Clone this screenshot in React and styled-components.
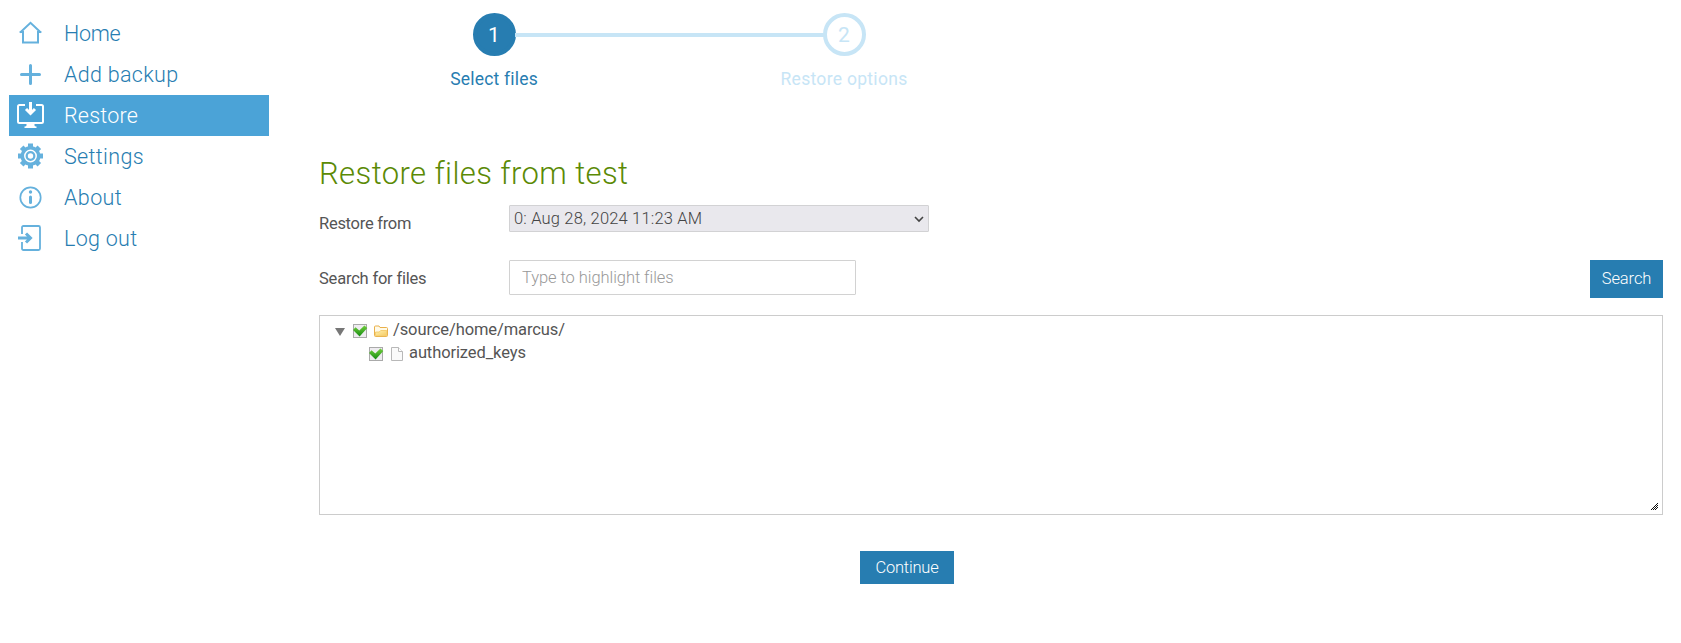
import React from "react";
import styled, { createGlobalStyle } from "styled-components";

const Global = createGlobalStyle`
  * { box-sizing: border-box; }
  body { margin: 0; background: #fff; color: #555; font: 16px/20px Roboto, "Liberation Sans", sans-serif; }
`;
const Page = styled.div`
  display: flex;
  width: 1681px;
  height: 643px;
  overflow: hidden;
`;
const Sidebar = styled.nav`
  width: 260px;
  margin: 13px 50px 0 9px;
  flex: none;
`;
const NavItem = styled.a`
  display: flex;
  align-items: center;
  height: 41px;
  color: ${(p) => (p.$active ? "#fff" : "#277db1")};
  background: ${(p) => (p.$active ? "#4ba3d7" : "transparent")};
  font-size: 21.5px;
  font-weight: 300;
  line-height: 40px;
  letter-spacing: ${(p) => p.$ls}px;
  white-space: nowrap;
  svg { width: 28px; height: 28px; margin: 0 20px 0 7px; flex: none; color: ${(p) => (p.$active ? "#fff" : "#65b1dd")}; }
  span { padding-top: 1px; }
`;
const Main = styled.main`
  width: 1344px;
  flex: none;
`;
const Steps = styled.div`
  display: flex;
  width: 700px;
  height: 92px;
  padding-top: 13px;
`;
const Step = styled.div`
  display: flex;
  flex-direction: column;
  align-items: center;
  width: 160px;
  margin-left: ${(p) => p.$gap}px;
  color: ${(p) => (p.$active ? "#277db1" : "#c7e5f6")};
`;
const Circle = styled.div`
  width: 43px;
  height: 43px;
  border-radius: 50%;
  border: 4px solid ${(p) => (p.$active ? "#277db1" : "#c7e5f6")};
  background: ${(p) => (p.$active ? "#277db1" : "#fff")};
  color: ${(p) => (p.$active ? "#fff" : "#c7e5f6")};
  font-size: 21px;
  line-height: 36px;
  text-align: center;
`;
const StepLabel = styled.div`
  margin-top: 13px;
  font-size: 17.5px;
  line-height: 20px;
  letter-spacing: ${(p) => p.$ls}px;
  white-space: nowrap;
`;
const Connector = styled.div`
  width: 309px;
  height: 4px;
  margin: 20px -60px 0 -59px;
  background: #c7e5f6;
  flex: none;
`;
const Title = styled.h1`
  margin: 0;
  padding-top: 62px;
  height: 113px;
  color: #5b8a05;
  font-size: 31px;
  font-weight: 300;
  line-height: 40px;
  letter-spacing: 0.4px;
`;
const Field = styled.div`
  display: flex;
  align-items: flex-start;
  height: 55px;
`;
const Label = styled.label`
  width: 190px;
  padding-top: 9px;
  font-size: 16.5px;
  line-height: 20px;
  letter-spacing: ${(p) => p.$ls}px;
`;
const Select = styled.div`
  display: flex;
  align-items: center;
  justify-content: space-between;
  width: 420px;
  height: 27px;
  padding: 0 4px;
  border: 1px solid #d2d2d4;
  border-radius: 1px;
  background: #e9e8ed;
  color: #444;
  font-size: 16.5px;
  font-weight: 300;
  letter-spacing: 0.18px;
`;
const Input = styled.input`
  width: 347px;
  height: 35px;
  padding: 0 12px 1px;
  border: 1px solid #d2d2d2;
  border-radius: 1px;
  outline: 0;
  font: 300 16.5px/20px Roboto, "Liberation Sans", sans-serif;
  letter-spacing: -0.06px;
  &::placeholder { color: #999; opacity: 1; }
`;
const Button = styled.button`
  width: ${(p) => p.$w}px;
  height: ${(p) => p.$h}px;
  padding: 0;
  border: 0;
  background: #277db1;
  color: #fff;
  font: 300 16.5px/20px Roboto, "Liberation Sans", sans-serif;
  letter-spacing: ${(p) => p.$ls}px;
`;
const SearchButton = styled(Button)`
  margin-left: auto;
  padding-bottom: 1px;
`;
const Tree = styled.div`
  position: relative;
  height: 200px;
  padding: 3px 0 0 15px;
  border: 1px solid #ccc;
`;
const TreeRow = styled.div`
  display: flex;
  align-items: center;
  height: 23px;
  padding-left: ${(p) => p.$indent}px;
  font-size: 16.5px;
  line-height: 20px;
  letter-spacing: -0.1px;
`;
const RowIcon = styled.svg`
  flex: none;
  margin: ${(p) => p.$top ?? 1}px ${(p) => p.$gap}px 0 0;
`;
const Name = styled.span`
  padding-bottom: 2px;
`;
const Grip = styled.svg`
  position: absolute;
  right: 4px;
  bottom: 4px;
`;
const Actions = styled.div`
  display: flex;
  justify-content: center;
  padding: 36px 168px 0 0;
`;

const HomeIcon = () => (
  <svg viewBox="0 0 28 28" fill="none" stroke="currentColor" strokeWidth="2"><path d="M4.200 12.500 14.500 2.800 24.800 12.500M7 11v11.500h15V11M3.600 12H7M22 12h3.400" /></svg>
);
const PlusIcon = () => (
  <svg viewBox="0 0 28 28" fill="none" stroke="currentColor" strokeWidth="3" strokeLinecap="round"><path d="M14.5 4.500v18M5.500 13.500h18" /></svg>
);
const RestoreIcon = () => (
  <svg viewBox="0 0 28 28" fill="none" stroke="currentColor" strokeWidth="2">
    <path d="M9 3H3.5Q2 3 2 4.500V19.500Q2 21 3.500 21H25.500Q27 21 27 19.500V4.500Q27 3 25.500 3H20" />
    <path d="M14.5 0v11" strokeWidth="3" /><path d="m10 7 4.500 4.500L19 7" strokeWidth="3" />
    <path fill="currentColor" stroke="none" d="M10.500 21.500h8v2q0 1 2 1v1.500H8.500v-1.500q2 0 2-1z" />
  </svg>
);
const GearIcon = () => (
  <svg viewBox="0 0 28 28" fill="none" stroke="currentColor">
    {[0, 45, 90, 135].map((a) => <path key={a} d="M14.500 .500v25" strokeWidth="5" transform={`rotate(${a} 14.500 13)`} />)}
    <circle cx="14.500" cy="13" r="10" fill="currentColor" stroke="none" />
    <circle cx="14.500" cy="13" r="5.700" stroke="#fff" strokeWidth="1.500" />
    <circle cx="14.500" cy="13" r="2.700" fill="#fff" stroke="none" />
  </svg>
);
const InfoIcon = () => (
  <svg viewBox="0 0 28 28" fill="none" stroke="currentColor">
    <circle cx="14.500" cy="13.500" r="10.200" strokeWidth="1.700" />
    <circle cx="14.500" cy="8" r="1.700" fill="currentColor" stroke="none" />
    <path d="M14.500 13v5.500" strokeWidth="3" strokeLinecap="round" />
  </svg>
);
const LogoutIcon = () => (
  <svg viewBox="0 0 28 28" fill="none" stroke="currentColor" strokeWidth="1.800">
    <path d="M6 9V2.500Q6 1 7.500 1H22.500Q24 1 24 2.500V23.500Q24 25 22.500 25H7.500Q6 25 6 23.500V17" />
    <path d="M2 13h12M10 8.500l4.500 4.500L10 17.500" strokeWidth="3" />
  </svg>
);
const Check = () => (
  <RowIcon $gap={5} width="16" height="16" viewBox="0 0 16 16">
    <defs><linearGradient id="tick" x2="0" y2="1"><stop stopColor="#72cf3c" /><stop offset="1" stopColor="#148b12" /></linearGradient></defs>
    <rect x="1.500" y="1.500" width="13" height="13" fill="#eeecf0" stroke="#aaa" />
    <path d="M1 7 3.500 4.300 7.300 7.600 12.400 2.500 15.300 5 7.600 13.500z" fill="url(#tick)" />
  </RowIcon>
);
const Folder = () => (
  <RowIcon $gap={4} width="16" height="16" viewBox="0 0 16 16">
    <defs><linearGradient id="fold" x2="1" y2="1"><stop stopColor="#fff0b0" /><stop offset="1" stopColor="#f5cb62" /></linearGradient></defs>
    <path d="M1.500 12.500V4Q1.500 3 2.500 3h3.500l1 1.500h6.500q1 0 1 1v7q0 1-1 1h-11q-1 0-1-1z" fill="#fffae8" stroke="#e9b04b" />
    <path d="M2.500 12.800V9h3.700l1.500-1.500h6v5.300z" fill="url(#fold)" stroke="#f1c55f" strokeWidth=".8" />
  </RowIcon>
);
const FileIcon = () => (
  <RowIcon $gap={4} width="16" height="16" viewBox="0 0 16 16">
    <path d="M2.500 1.500h7l4 4v9h-11z" fill="#fafafa" stroke="#b8b8b8" /><path d="M9.500 1.500v4h4" fill="#fff" stroke="#b8b8b8" />
  </RowIcon>
);

const items = [
  ["Home", HomeIcon, -0.3], ["Add backup", PlusIcon, 0.3], ["Restore", RestoreIcon, 0.2],
  ["Settings", GearIcon, 0.35], ["About", InfoIcon, 0.4], ["Log out", LogoutIcon, 0.3],
];
const gripDots = [[6, 0], [5, 1], [4, 2], [6, 2], [3, 3], [5, 3], [2, 4], [4, 4], [6, 4], [1, 5], [3, 5], [5, 5], [0, 6], [2, 6], [4, 6]];

export default function App() {
  return (
    <Page>
      <Global />
      <Sidebar>
        {items.map(([name, Icon, ls]) => (
          <NavItem key={name} $active={name === "Restore"} $ls={ls}><Icon /><span>{name}</span></NavItem>
        ))}
      </Sidebar>
      <Main>
        <Steps>
          <Step $active $gap={95}><Circle $active>1</Circle><StepLabel $ls={0.2}>Select files</StepLabel></Step>
          <Connector />
          <Step $gap={0}><Circle>2</Circle><StepLabel $ls={0.3}>Restore options</StepLabel></Step>
        </Steps>
        <Title>Restore files from test</Title>
        <Field>
          <Label $ls={-0.27}>Restore from</Label>
          <Select>
            <span>0: Aug 28, 2024 11:23 AM</span>
            <svg width="10" height="8" viewBox="0 0 10 8" fill="none" stroke="#444" strokeWidth="1.600"><path d="m1 2 4 4 4-4" /></svg>
          </Select>
        </Field>
        <Field>
          <Label $ls={-0.2}>Search for files</Label>
          <Input placeholder="Type to highlight files" />
          <SearchButton $w={73} $h={38} $ls={-0.1}>Search</SearchButton>
        </Field>
        <Tree>
          <TreeRow $indent={0}>
            <RowIcon $gap={7} $top={2} width="10" height="8" viewBox="0 0 10 8"><path d="M0 0h10L5 8z" fill="#777" /></RowIcon>
            <Check /><Folder /><Name>/source/home/marcus/</Name>
          </TreeRow>
          <TreeRow $indent={33}>
            <Check /><FileIcon /><Name>authorized_keys</Name>
          </TreeRow>
          <Grip width="7" height="7" shapeRendering="crispEdges">{gripDots.map(([x, y]) => <rect key={`${x}-${y}`} x={x} y={y} width="1" height="1" fill="#111" />)}</Grip>
        </Tree>
        <Actions><Button $w={94} $h={33} $ls={-0.2}>Continue</Button></Actions>
      </Main>
    </Page>
  );
}
